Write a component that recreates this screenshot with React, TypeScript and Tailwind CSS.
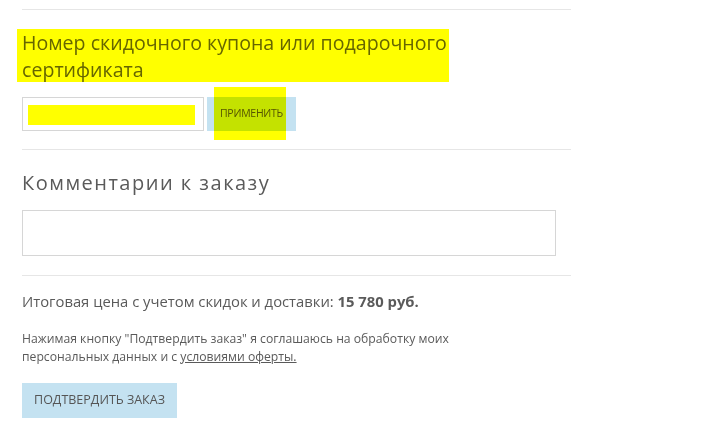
// Оформление заказа — купон, комментарий, итог

export default function App() {
  return (
    <div className="w-[704px] h-[425px] bg-white overflow-hidden font-['Open_Sans',sans-serif] text-[#5a5a5a]">
      <div className="ml-[22px] w-[549px]">
        <div className="h-[10px] border-b border-[#e6e6e6]" />

        {/* Купон */}
        <div className="-ml-[5px] mt-[19px] w-[432px] h-[53px] bg-[#ffff00] pl-[5px]">
          <h2 className="text-[19.6px] leading-[27px] text-[#666600] font-normal">
            Номер скидочного купона или подарочного сертификата
          </h2>
        </div>

        <div className="mt-[15px] flex items-stretch gap-[3px] h-[34px]">
          <div className="w-[182px] border border-[#d6d6d6] px-[5px] py-[7px]">
            <div className="h-[20px] w-[167px] bg-[#ffff00]" />
          </div>
          <div className="relative w-[89px] bg-[#c4e2f1] flex items-center justify-center">
            <span className="relative z-10 text-[10.5px] tracking-tight text-[#555]">ПРИМЕНИТЬ</span>
            <div className="absolute left-[7px] -top-[10px] w-[72px] h-[53px] bg-[#ffff00] mix-blend-multiply z-20" />
          </div>
        </div>

        <div className="mt-[18px] border-b border-[#e6e6e6]" />

        {/* Комментарий */}
        <h2 className="mt-[20px] text-[20px] leading-[26px] tracking-[1.5px] font-normal">Комментарии к заказу</h2>
        <div className="mt-[14px] w-[534px] h-[46px] border border-[#d6d6d6]" />

        <div className="mt-[19px] border-b border-[#e6e6e6]" />

        {/* Итог */}
        <p className="mt-[15px] text-[14.8px] leading-[20px]">
          Итоговая цена с учетом скидок и доставки: <b className="font-bold">15 780 руб.</b>
        </p>
        <p className="mt-[19px] text-[12.2px] leading-[18px] w-[450px]">
          Нажимая кнопку "Подтвердить заказ" я соглашаюсь на обработку моих персональных данных и с{" "}
          <span className="underline">условиями оферты.</span>
        </p>

        <button className="mt-[17px] w-[155px] h-[35px] bg-[#c4e2f1] text-[12.5px] text-[#555]">
          ПОДТВЕРДИТЬ ЗАКАЗ
        </button>
      </div>
    </div>
  );
}
